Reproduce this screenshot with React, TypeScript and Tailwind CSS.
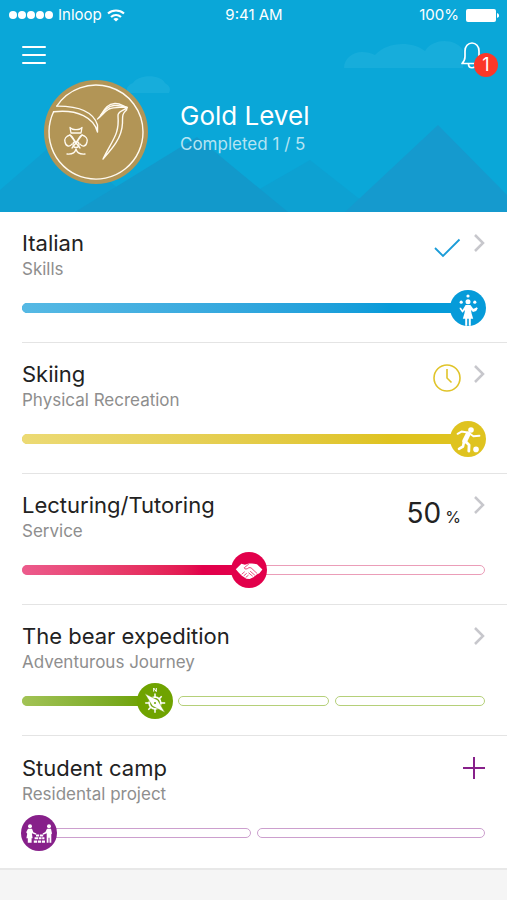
import type { ReactNode } from 'react';

type Segment = {
  // knob position inside the segment, 0-100
  knob?: number;
};

type Activity = {
  title: string;
  category: string;
  color: string;
  border: string;
  gradient: string;
  segments: Segment[];
  icon: ReactNode;
  status?: ReactNode;
  canAdd?: boolean;
};

function JugglerIcon() {
  return (
    <svg viewBox="0 0 36 36" className="size-9" fill="#fff" aria-hidden="true">
      <circle cx="18" cy="6" r="1.6" />
      <circle cx="11.2" cy="12.2" r="1.6" />
      <circle cx="24.8" cy="12.2" r="1.6" />
      <circle cx="18" cy="11.8" r="2.5" />
      <path d="M15.6 15h4.8l2.8 3.8 1.8-.6 1.6-1 1.2 1.1-1.6 2.6-3.2 1-2-1.8.6 3.4 1.6 5.2h-2.4v7.1h-2v-7.1h-1.600v7.100h-2v-7.100h-2.400l1.600-5.200.600-3.400-2.600 2.600-2.800-3.900.300-1.300 1.200.500 1.400 2Z" />
    </svg>
  );
}

function FootballIcon() {
  return (
    <svg viewBox="0 0 36 36" className="size-9" fill="none" stroke="#fff" strokeLinecap="round" strokeLinejoin="round" aria-hidden="true">
      <circle cx="21" cy="9" r="2.8" fill="#fff" stroke="none" />
      <circle cx="26" cy="28.4" r="2.8" fill="#fff" stroke="none" />
      <path d="m18.200 13-3.400 6.800" strokeWidth="5" />
      <path d="M17.500 11.500 11.500 10.600 7.600 12.800" strokeWidth="2" />
      <path d="m20 12.800 3.400 2.400 6-.400" strokeWidth="2" />
      <path d="m15.500 20.500 3.600 3.600-.300 6" strokeWidth="2.800" />
      <path d="m14 20.500-1 5-4 2.300" strokeWidth="2.600" />
    </svg>
  );
}

function HandshakeIcon() {
  return (
    <svg viewBox="0 0 36 36" className="size-9" aria-hidden="true">
      <path
        d="M4.800 17.200 10.400 11.800l3.600 1 3.600-1.400 3.400.200 5 .600 5.400 5.300-3 3.700-2.600 1.200-3.400 2.800-3.800 1.800-3.200-.300-4.600-3-3.200-3.200Z"
        fill="#fff"
      />
      <g fill="none" stroke="#e2004b" strokeWidth="0.7" strokeLinecap="round">
        <path d="m17.600 12.200-4.400 3.600c.6 1.800 2.600 1.600 4.800-.2l2 .2 6 5.600" />
        <path d="m19.500 19.500 4 3.400M17.800 21l3.600 3M11 22l2.400-2M13 23.600l2.400-2M15 25.200l2.200-1.800" />
      </g>
    </svg>
  );
}

function CompassIcon() {
  return (
    <svg viewBox="0 0 36 36" className="size-9" fill="none" stroke="#fff" aria-hidden="true">
      <path d="M16.700 8.600V5l2.600 3.600V5" strokeWidth="1" />
      <circle cx="18" cy="20" r="5.800" strokeWidth="1.800" />
      <path d="M18 10.500V15M18 25v4.800M8.200 20H12M24 20h4.200M11.300 26.700l2.800-2.800M24.700 13.300l-2.800 2.800" strokeWidth="1.500" />
      <path d="M7.800 10.600 20.600 17l7.400 12.600L15.400 23Z" fill="#fff" stroke="#6fa300" strokeWidth="0.500" />
      <circle cx="18" cy="20" r="1" fill="#6fa300" stroke="none" />
    </svg>
  );
}

function ProjectIcon() {
  return (
    <svg viewBox="0 0 36 36" className="size-9" fill="#fff" aria-hidden="true">
      <circle cx="9" cy="11.300" r="2" />
      <circle cx="28" cy="11.300" r="2" />
      <path d="M7 13.800h4l1.400 3.400 3 1.300-.500 1.200-4-1.400.700 5h-1v4.500H6.800v-4.500H5.400l.800-4.600-1-1.400Z" />
      <path d="M30 13.800h-4l-1.600 3.200-2.800 1.500.600 1.200 3.500-1.500v9.600h1.800v-5h1v5h1.800v-8.500l.700-.800Z" />
      <path d="M15 19.500h3.200v2H15zM19 19.500h3.200v2H19zM13.600 22.300h3.400v2h-3.400zM17.700 22.300h2.800v2h-2.800zM21.200 22.300h2.200v2h-2.200zM12.800 25.400h3.400v2.400h-3.400zM17 25.400h3v2.400h-3zM20.800 25.400H24v2.400h-3.200z" />
    </svg>
  );
}

function CheckIcon() {
  return (
    <svg viewBox="0 0 28 28" className="size-7" fill="none" stroke="#1a9cd8" strokeWidth="1.800" role="img" aria-label="Completed">
      <path d="m2 15 8 8L26.500 6.500" />
    </svg>
  );
}

function ClockIcon() {
  return (
    <svg viewBox="0 0 28 28" className="size-7" fill="none" stroke="#e0c42a" strokeWidth="1.600" role="img" aria-label="Waiting for approval">
      <circle cx="14" cy="14" r="13" />
      <path d="M14 5v9l4.500 4.500" />
    </svg>
  );
}

const activities: Activity[] = [
  {
    title: 'Italian',
    category: 'Skills',
    color: 'bg-[#069bd9]',
    border: 'border-[#069bd9]',
    gradient: 'from-[#56b9e4] to-[#069bd9]',
    segments: [{ knob: 100 }],
    icon: <JugglerIcon />,
    status: <CheckIcon />,
  },
  {
    title: 'Skiing',
    category: 'Physical Recreation',
    color: 'bg-[#dfc31f]',
    border: 'border-[#dfc83c]',
    gradient: 'from-[#ecda74] to-[#dfc31f]',
    segments: [{ knob: 100 }],
    icon: <FootballIcon />,
    status: <ClockIcon />,
  },
  {
    title: 'Lecturing/Tutoring',
    category: 'Service',
    color: 'bg-[#e2004b]',
    border: 'border-[#eb9db8]',
    gradient: 'from-[#ec5b8c] to-[#e2004b]',
    segments: [{ knob: 49 }],
    icon: <HandshakeIcon />,
    status: (
      <p className="flex items-baseline gap-1 pt-1 leading-7 text-[#222]">
        <span className="text-[28px]">50</span>
        <span className="text-base">%</span>
      </p>
    ),
  },
  {
    title: 'The bear expedition',
    category: 'Adventurous Journey',
    color: 'bg-[#6fa300]',
    border: 'border-[#b5d079]',
    gradient: 'from-[#a2c355] to-[#6fa300]',
    segments: [{ knob: 100 }, {}, {}],
    icon: <CompassIcon />,
  },
  {
    title: 'Student camp',
    category: 'Residental project',
    color: 'bg-[#87208a]',
    border: 'border-[#cc9fce]',
    gradient: 'from-[#b770b9] to-[#87208a]',
    segments: [{ knob: 0 }, {}],
    icon: <ProjectIcon />,
    canAdd: true,
  },
];

function Scenery() {
  return (
    <svg viewBox="0 0 507 212" preserveAspectRatio="none" className="absolute inset-0 size-full" aria-hidden="true">
      <g fill="#17addb">
        <path d="M128 93c-3-4 0-8 5-10 5-9 28-9 32 0 5 3 6 6 4 10Z" />
        <path d="M344 68c0-9 8-16 18-16 5 0 9 1 13 3 12-14 38-14 50-4 8-13 30-13 38-1v18Z" />
      </g>
      <path d="M0 190 60 138l85 74H0Z" fill="#0e9fd1" />
      <path d="m220 212 90-52 66 52Z" fill="#0da1d2" />
      <path d="m75 212 122-75 91 75Z" fill="#1299cb" />
      <path d="M345 212 438 125l69 70v17Z" fill="#159ace" />
    </svg>
  );
}

function GoldBadge() {
  return (
    <svg viewBox="0 0 104 104" className="size-26 shrink-0" role="img" aria-label="Gold award">
      <circle cx="52" cy="52" r="52" fill="#b29556" />
      <g fill="none" stroke="#fffaf0" strokeWidth="1.400" strokeLinecap="round" strokeLinejoin="round">
        <path d="M12.800 26.100A47 47 0 0 1 99 52 47 47 0 1 1 9.600 31.800" />
        <path d="M12.800 26.100C30 26 49 30 53.500 45V52C50 38 34 29 9.600 31.800" />
        <path d="M53.500 39C59 35 60 24 71 23.500c5-.200 8 2.500 12 4-6 0-13-1-18 1.500-5 3-7 7-11.500 10Z" />
        <path d="M57 35c4-5 7-9 13-9.500 4-.300 8 .500 13 2" />
        <path d="M83 27.500c-4 4-9.500 3.500-9 8.500 1.500 18-5 23-15 43 9-10 19-21 19.500-36 0-7-.500-9 4-13Z" />
        <g strokeWidth="1.300">
          <path d="m26 47.500 2 1.500c3 .800 5 .800 8 0l2-1.500-1 5.500H27Z" />
          <path d="M32 64c-2-4-3-8-6-9-4 1-6 4-5 7 1 5 5 5 7 2M32 64c2-4 3-8 6-9 4 1 6 4 5 7-1 5-5 5-7 2" />
          <path d="m26 55 10 13M38 55 28 68" />
          <circle cx="32" cy="64.500" r="3" />
          <path d="M23 74c5 .500 8-1 9-5 1 4 4 5.500 9 5" />
        </g>
      </g>
    </svg>
  );
}

function StatusBar() {
  return (
    <div className="relative grid h-[30px] grid-cols-3 items-center pr-2 pl-[9px] text-[15px] leading-5">
      <div className="flex items-center gap-[5px]">
        <div className="flex gap-px">
          {[1, 2, 3, 4, 5].map((dot) => (
            <span key={dot} className="size-2 rounded-full bg-white" />
          ))}
        </div>
        <span>Inloop</span>
        <svg viewBox="0 0 18 13" className="h-[13px] w-[18px]" fill="none" stroke="#fff" strokeWidth="2.200" aria-hidden="true">
          <path d="M1 4.500c4.500-4 11.500-4 16 0M4 8c3-2.600 7-2.600 10 0" />
          <path d="M9 12.500 6.300 9.900c1.600-1.200 3.800-1.200 5.400 0Z" fill="#fff" stroke="none" />
        </svg>
      </div>
      <span className="text-center">9:41 AM</span>
      <div className="flex items-center justify-end gap-[7px]">
        <span>100%</span>
        <svg viewBox="0 0 33 13" className="h-[13px] w-[33px]" fill="#fff" aria-hidden="true">
          <rect width="30" height="13" rx="2" />
          <path d="M31 4c3 1 3 4 0 5Z" />
        </svg>
      </div>
    </div>
  );
}

function Header() {
  return (
    <header className="relative bg-[#0aa7d8] text-white">
      <Scenery />
      <StatusBar />
      <div className="relative flex h-[50px] items-center justify-between pr-[9px] pl-[22px]">
        <button type="button" aria-label="Menu" className="flex w-6 flex-col gap-[6px]">
          <span className="h-[2px] rounded bg-white" />
          <span className="h-[2px] rounded bg-white" />
          <span className="h-[2px] rounded bg-white" />
        </button>
        <button type="button" aria-label="Notifications, 1 new" className="relative h-8 w-[38px]">
          <svg viewBox="0 0 24 30" className="h-[30px] w-6" fill="none" stroke="#fff" strokeWidth="1.700" strokeLinejoin="round" aria-hidden="true">
            <path d="M2 23.500c2.500-2.500 3-4 3-7V11c0-4.600 3-8 7-8s7 3.400 7 8v5.500c0 3 .500 4.500 3 7Z" />
            <path d="M8.500 24c0 5 7 5 7 0" />
          </svg>
          <span className="absolute right-0 -bottom-[6px] flex size-6 items-center justify-center rounded-full bg-[#fb3728] text-lg leading-6">
            1
          </span>
        </button>
      </div>
      <div className="relative flex gap-8 px-11 pb-7">
        <GoldBadge />
        <div className="pt-5">
          <h1 className="text-[26px] leading-8">Gold Level</h1>
          <p className="text-[17px] leading-6 text-[#b5e4f3]">Completed 1 / 5</p>
        </div>
      </div>
    </header>
  );
}

function Track({ activity }: { activity: Activity }) {
  return (
    <div className="mt-[9px] flex h-9 items-center gap-[6px]">
      {activity.segments.map((segment, i) => (
        <div key={i} className={`relative h-[10px] flex-1 rounded-full border ${activity.border}`}>
          {segment.knob !== undefined && (
            <>
              {segment.knob > 0 && (
                <div
                  className={`absolute -inset-y-px -left-px rounded-full bg-linear-to-r to-80% ${activity.gradient}`}
                  style={{ width: `${segment.knob}%` }}
                />
              )}
              <div
                className={`absolute -top-[14px] size-9 rounded-full ${activity.color}`}
                style={{ left: `calc((100% - 32px) * ${segment.knob / 100} - 2px)` }}
              >
                {activity.icon}
              </div>
            </>
          )}
        </div>
      ))}
    </div>
  );
}

function ActivityRow({ activity }: { activity: Activity }) {
  return (
    <li className="ml-[22px] border-b border-[#e4e4e4] pt-[17px] pr-[22px] pb-4 last:border-b-0 last:pt-[18px] last:pb-[17px]">
      <div className="flex justify-between">
        <div>
          <h2 className="text-[22px] leading-7 text-[#222]">{activity.title}</h2>
          <p className="text-[17px] leading-6 text-[#8e8e8e]">{activity.category}</p>
        </div>
        <div className="flex gap-3">
          <div className="pt-1">{activity.status}</div>
          {activity.canAdd ? (
            <button type="button" aria-label={`Add ${activity.title}`} className="h-7">
              <svg viewBox="0 0 22 22" className="size-[22px]" stroke="#87208a" strokeWidth="2" aria-hidden="true">
                <path d="M0 11h22M11 0v22" />
              </svg>
            </button>
          ) : (
            <a href="#" aria-label={`Open ${activity.title}`} className="flex h-7 items-center">
              <svg viewBox="0 0 12 18" className="h-[18px] w-3" fill="none" stroke="#c7c7cc" strokeWidth="2.500" aria-hidden="true">
                <path d="m2 1 8 8-8 8" />
              </svg>
            </a>
          )}
        </div>
      </div>
      <Track activity={activity} />
    </li>
  );
}

export default function App() {
  return (
    <div className="flex min-h-screen flex-col bg-white font-[Inter,sans-serif]">
      <Header />
      <ul>
        {activities.map((activity) => (
          <ActivityRow key={activity.title} activity={activity} />
        ))}
      </ul>
      <footer className="flex-1 border-t-2 border-[#e8e8e8] bg-[#f5f5f5]" />
    </div>
  );
}
